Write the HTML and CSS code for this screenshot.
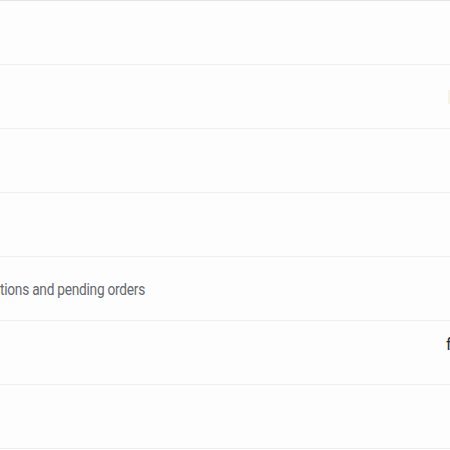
FILE: index.html
```html
<!DOCTYPE html>
<html>
<head>
<meta charset="utf-8">
<link rel="stylesheet" href="styles.css">
</head>
<body>
<div class="list">
  <div class="row"></div>
  <div class="row"><span class="edge-mark"></span></div>
  <div class="row"></div>
  <div class="row"></div>
  <div class="row"><span class="desc">tions and pending orders</span></div>
  <div class="row row-right"><span class="value">f</span></div>
  <div class="row"></div>
</div>
</body>
</html>
```

FILE: styles.css
```css
html, body {
  margin: 0;
  padding: 0;
  background: #ffffff;
  overflow: hidden;
  width: 450px;
  height: 450px;
}
.list {
  border-top: 1px solid #e4e4e4;
  display: flex;
  flex-direction: column;
}
.row {
  height: 63px;
  border-bottom: 1px solid #efefef;
  background: #fdfdfd;
  display: flex;
  align-items: center;
  overflow: hidden;
  position: relative;
}
.desc {
  display: inline-block;
  font-family: Roboto, "Liberation Sans", sans-serif;
  font-size: 16.5px;
  color: #66696d;
  letter-spacing: -0.3px;
  white-space: nowrap;
  margin-top: 2px;
  transform: scaleX(0.83);
  transform-origin: left center;
}
.row-right {
  justify-content: flex-end;
  align-items: flex-start;
}
.value {
  font-family: Roboto, "Liberation Sans", sans-serif;
  font-size: 16px;
  color: #2b2b2b;
  margin-top: 14px;
  margin-right: -6px;
  width: 10px;
}
.edge-mark {
  position: absolute;
  right: 0;
  top: 25px;
  width: 2px;
  height: 14px;
  background: #f6f3e6;
}
```
